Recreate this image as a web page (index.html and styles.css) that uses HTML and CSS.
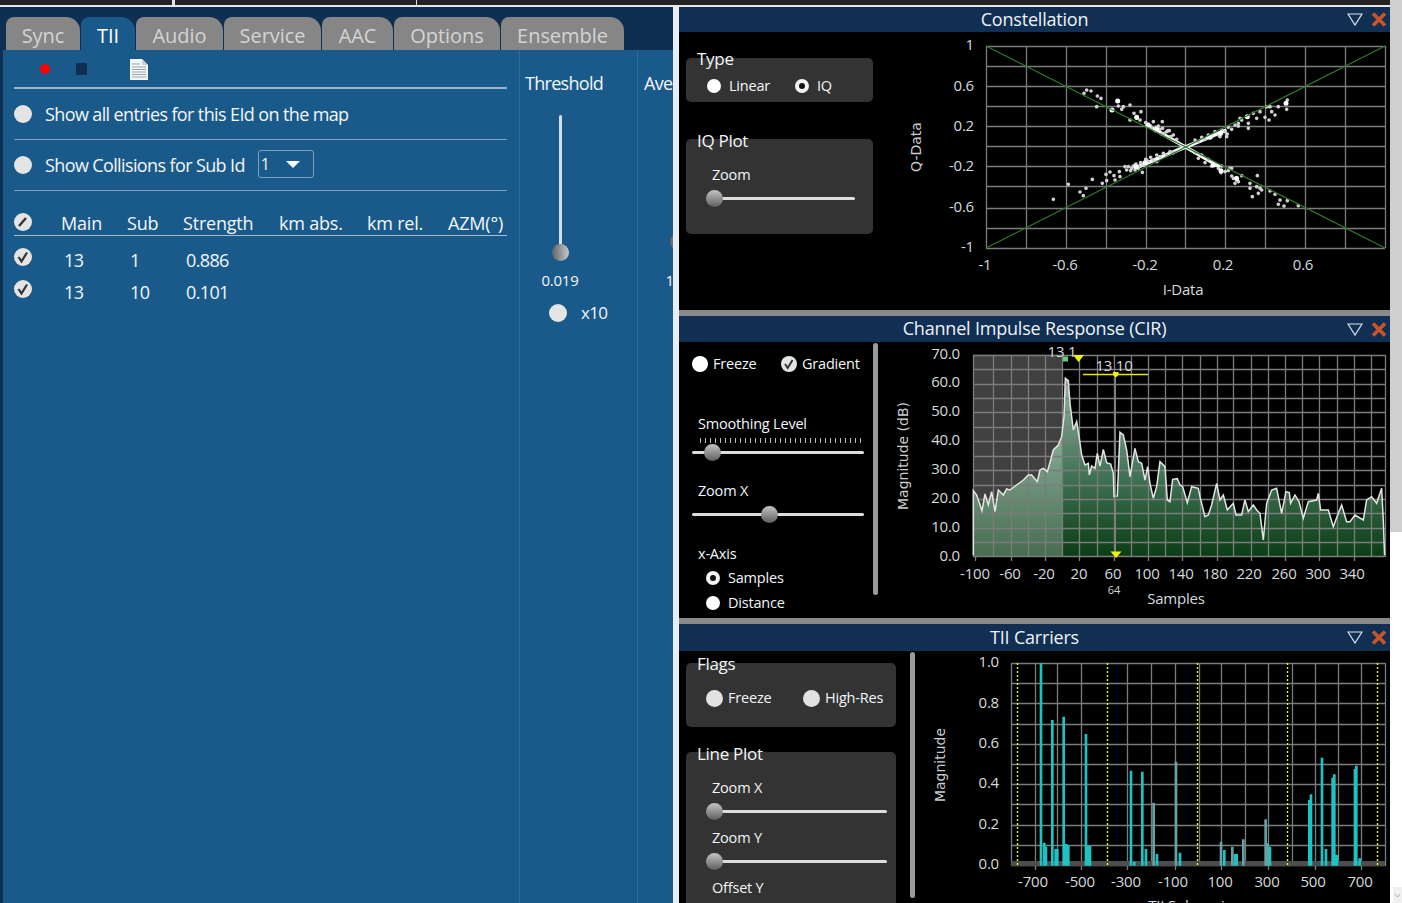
FILE: index.html
```html
<!doctype html>
<html lang="en">
<head>
  <meta charset="utf-8" />
  <title>TII</title>
  <link rel="stylesheet" href="styles.css">
</head>
<body>
  <div class="app">
    <div class="topstrip"><span class="tick-a"></span><span class="tick-b"></span></div>
    <div class="work">

      <!-- left: tab pane -->
      <div class="left">
        <div class="tabs">
          <div class="tab">Sync</div>
          <div class="tab active">TII</div>
          <div class="tab">Audio</div>
          <div class="tab">Service</div>
          <div class="tab">AAC</div>
          <div class="tab">Options</div>
          <div class="tab">Ensemble</div>
        </div>
        <div class="pane">
          <div class="col-main">
            <div class="toolbar">
              <span class="rec"></span>
              <span class="stop"></span>
              <svg class="doc" viewBox="0 0 18 22">
                <path d="M0 1h12l6 6v15H0z" fill="#f4f6f8"/>
                <path d="M12 1v6h6z" fill="#c9d0d6"/>
                <path d="M2 6h8M2 9h14M2 11.500h14M2 14h14M2 16.500h14M2 19h14" stroke="#9aa3ab" stroke-width="1"/>
              </svg>
            </div>
            <div class="opt"><span class="dot big"></span><span>Show all entries for this EId on the map</span></div>
            <div class="opt">
              <span class="dot big"></span><span>Show Collisions for Sub Id</span>
              <div class="combo"><span>1</span><i></i></div>
            </div>
            <div class="grid-head">
              <svg class="chk head-chk" viewBox="0 0 18 18"><circle cx="9" cy="9" r="9" fill="#e4e4e4"/><path d="M5 13l7-8" stroke="#333" stroke-width="2.400"/></svg>
              <span>Main</span><span>Sub</span><span>Strength</span><span>km abs.</span><span>km rel.</span><span>AZM(°)</span>
            </div>
            <div class="grid-row">
              <svg class="chk" viewBox="0 0 18 18"><circle cx="9" cy="9" r="9" fill="#e4e4e4"/><path d="M4.500 9l3 4.500L13 4.500" fill="none" stroke="#333" stroke-width="2.200"/></svg>
              <span>13</span><span>1</span><span>0.886</span>
            </div>
            <div class="grid-row">
              <svg class="chk" viewBox="0 0 18 18"><circle cx="9" cy="9" r="9" fill="#e4e4e4"/><path d="M4.500 9l3 4.500L13 4.500" fill="none" stroke="#333" stroke-width="2.200"/></svg>
              <span>13</span><span>10</span><span>0.101</span>
            </div>
          </div>

          <div class="col-level">
            <div class="level-title">Threshold</div>
            <div class="vslider"><span class="knob-v" style="top:129px"></span></div>
            <div class="level-value">0.019</div>
            <div class="x10"><span class="dot big"></span><span>x10</span></div>
          </div>

          <div class="col-level">
            <div class="level-title">Average</div>
            <div class="vslider"><span class="knob-v" style="top:118px"></span></div>
            <div class="level-value">10.0</div>
          </div>
        </div>
      </div>

      <div class="gutter"></div>

      <!-- right: docks -->
      <div class="docks">

        <section class="dock dock-iq">
          <div class="dock-title h25">
            <span class="dock-name">Constellation</span>
            <span class="dock-btns">
              <svg class="btn-min" viewBox="0 0 16 13"><path d="M1 1h14L8 12z" fill="none" stroke="#dfe6ec" stroke-width="1.200"/></svg>
              <svg class="btn-close" viewBox="0 0 16 15"><path d="M2 1.500l12 12M14 1.500l-12 12" stroke="#c9562a" stroke-width="3.600"/></svg>
            </span>
          </div>
          <div class="dock-body">
            <div class="side w218">
              <div class="group type-box">
                <div class="group-title">Type</div>
                <div class="radios r88">
                  <label class="radio"><span class="dot"></span>Linear</label>
                  <label class="radio"><span class="dot on"></span>IQ</label>
                </div>
              </div>
              <div class="group iq-box">
                <div class="group-title t2">IQ Plot</div>
                <div class="ctl-label">Zoom</div>
                <div class="hslider s149"><span class="knob" style="left:0"></span></div>
              </div>
            </div>
            <svg class="plot" width="493" height="278" viewBox="897 32 493 278">
              <path class="grid" d="M986.500 46V248M1026.500 46V248M1066.500 46V248M1106.500 46V248M1146.500 46V248M1185.500 46V248M1225.500 46V248M1265.500 46V248M1305.500 46V248M1345.500 46V248M1385.500 46V248M986 46.500H1385M986 66.500H1385M986 86.500H1385M986 106.500H1385M986 126.500H1385M986 146.500H1385M986 166.500H1385M986 186.500H1385M986 208.500H1385M986 228.500H1385M986 248.500H1385"/>
              <g transform="translate(980 40) scale(.3333)">
                <path class="band" d="M520 266L616 321M480 378L616 321"/>
                <path class="scatter" d="M320 150h.1M312 160h.1M333 153h.1M352 168h.1M363 175h.1M350 200h.1M415 198h.1M430 200h.1M450 195h.1M395 210h.1M425 208h.1M462 220h.1M483 215h.1M450 240h.1M470 235h.1M480 240h.1M520 245h.1M547 245h.1M565 272h.1M220 478h.1M265 433h.1M300 456h.1M310 467h.1M318 445h.1M337 418h.1M367 430h.1M380 422h.1M378 403h.1M390 396h.1M402 407h.1M418 395h.1M420 410h.1M405 420h.1M435 380h.1M440 390h.1M465 375h.1M487 397h.1M455 385h.1M500 360h.1M530 365h.1"/>
                <path class="scatter" d="M497 248h.1M505 252h.1M512 258h.1M528 262h.1M535 258h.1M540 268h.1M548 265h.1M552 280h.1M560 275h.1M568 272h.1M572 290h.1M580 285h.1M590 298h.1M500 258h.1M515 265h.1M525 272h.1M545 282h.1M445 380h.1M452 392h.1M460 378h.1M468 372h.1M475 385h.1M482 368h.1M490 375h.1M497 358h.1M505 365h.1M512 352h.1M520 360h.1M530 345h.1M540 350h.1M550 340h.1M560 345h.1M570 335h.1M580 338h.1M465 390h.1M478 378h.1"/>
                <path class="scatter hot" d="M413 183h.1M396 210h.1M470 232h.1M505 256h.1M530 268h.1M468 380h.1M495 368h.1"/>
              </g>
              <g transform="translate(1190 40) scale(.3333)">
                <path class="band" d="M-13 321L105 272M-13 321L85 378"/>
                <path class="scatter" d="M292 180h.1M287 190h.1M290 208h.1M265 200h.1M240 200h.1M230 200h.1M210 215h.1M245 215h.1M255 225h.1M200 235h.1M237 240h.1M225 232h.1M175 265h.1M175 250h.1M150 235h.1M145 258h.1M110 290h.1M190 220h.1M125 408h.1M140 420h.1M155 407h.1M135 430h.1M180 430h.1M202 407h.1M200 440h.1M180 445h.1M215 450h.1M205 460h.1M187 470h.1M240 453h.1M255 463h.1M270 480h.1M292 482h.1M265 493h.1M282 498h.1M325 497h.1M93 398h.1M120 385h.1M210 445h.1"/>
                <path class="scatter" d="M15 300h.1M25 305h.1M35 292h.1M45 298h.1M55 285h.1M65 290h.1M75 275h.1M85 285h.1M95 270h.1M105 275h.1M115 262h.1M125 268h.1M135 255h.1M145 250h.1M155 240h.1M90 290h.1M112 282h.1M15 338h.1M25 355h.1M35 345h.1M45 368h.1M55 358h.1M65 378h.1M75 372h.1M85 385h.1M95 378h.1M105 395h.1M115 392h.1M125 385h.1M130 415h.1M145 425h.1"/>
                <path class="scatter hot" d="M288 190h.1M172 230h.1M140 415h.1M60 292h.1M92 280h.1M70 375h.1M93 392h.1"/>
              </g>
              <path class="diag" d="M986 46L1385 248M986 248L1385 46"/>
              <g class="tk end">
                <text x="974" y="50">1</text><text x="974" y="91">0.6</text><text x="974" y="131">0.2</text><text x="974" y="171">-0.2</text><text x="974" y="212">-0.6</text><text x="974" y="252">-1</text>
              </g>
              <g class="tk mid">
                <text x="985" y="270">-1</text><text x="1065" y="270">-0.6</text><text x="1145" y="270">-0.2</text><text x="1223" y="270">0.2</text><text x="1303" y="270">0.6</text>
                <text x="1183" y="295">I-Data</text>
              </g>
              <text class="ax" transform="rotate(-90 921 147)" x="921" y="147">Q-Data</text>
            </svg>
          </div>
        </section>

        <div class="sash"></div>

        <section class="dock dock-cir">
          <div class="dock-title h26">
            <span class="dock-name">Channel Impulse Response (CIR)</span>
            <span class="dock-btns">
              <svg class="btn-min" viewBox="0 0 16 13"><path d="M1 1h14L8 12z" fill="none" stroke="#dfe6ec" stroke-width="1.200"/></svg>
              <svg class="btn-close" viewBox="0 0 16 15"><path d="M2 1.500l12 12M14 1.500l-12 12" stroke="#c9562a" stroke-width="3.600"/></svg>
            </span>
          </div>
          <div class="dock-body">
            <div class="side w218 cir-side">
              <div class="side-scroll">
                <div class="radios r89 cir-flags">
                  <label class="radio"><span class="dot"></span>Freeze</label>
                  <label class="radio"><svg class="chk" viewBox="0 0 18 18"><circle cx="9" cy="9" r="9" fill="#e4e4e4"/><path d="M4.500 9l3 4.500L13 4.500" fill="none" stroke="#333" stroke-width="2.200"/></svg>Gradient</label>
                </div>
                <div class="plain-label m42">Smoothing Level</div>
                <div class="notches"></div>
                <div class="hslider s172 thick"><span class="knob" style="left:12px"></span></div>
                <div class="plain-label m21">Zoom X</div>
                <div class="hslider s172 gap6"><span class="knob" style="left:69px"></span></div>
                <div class="plain-label m22">x-Axis</div>
                <label class="radio axis-a"><span class="dot on"></span>Samples</label>
                <label class="radio axis-b"><span class="dot"></span>Distance</label>
              </div>
              <div class="vbar h252"></div>
            </div>
            <svg class="plot" width="493" height="276" viewBox="897 342 493 276">
              <defs>
                <linearGradient id="cirFill" gradientUnits="userSpaceOnUse" x1="0" y1="90" x2="0" y2="651">
                  <stop offset="0" stop-color="#9db5a6"/>
                  <stop offset=".53" stop-color="#45785a"/>
                  <stop offset="1" stop-color="#0a3c14"/>
                </linearGradient>
                <clipPath id="cirClip"><rect x="0" y="0" width="1290" height="646"/></clipPath>
                <path id="cirCurve" d="M40 650L40 452L50 465L66 512L75 462L85 495L95 455L105 515L115 450L130 465L140 447L150 450L170 435L190 420L205 405L215 405L232 425L240 390L250 385L262 395L272 360L280 330L295 315L305 290L312 230L316 115L325 122L330 190L340 270L350 245L358 295L365 345L375 375L385 370L388 405L395 378L405 385L412 340L420 378L430 328L440 368L452 372L460 400L462 470L472 468L480 277L490 285L500 330L510 410L517 370L525 325L535 365L545 370L555 420L563 380L570 430L580 475L590 440L600 365L615 380L622 480L630 485L638 418L652 416L660 435L668 440L682 488L695 440L715 445L720 470L735 530L745 525L755 495L770 430L780 480L790 465L802 510L820 490L828 525L845 525L855 480L865 515L880 495L890 510L900 520L910 600L920 490L935 450L950 445L965 520L978 455L988 458L992 490L1005 465L1017 485L1030 535L1045 485L1070 480L1075 460L1082 510L1105 510L1120 560L1135 520L1145 495L1160 545L1170 545L1185 525L1210 540L1220 480L1235 470L1250 490L1265 445L1270 540L1274 650"/>
              </defs>
              <g transform="translate(960 340) scale(.3333)">
                <use href="#cirCurve" fill="url(#cirFill)"/>
                <rect x="40" y="44" width="267" height="606" fill="#fff" opacity=".25"/>
              </g>
              <path class="grid" d="M973.500 355V557M993.500 355V557M1011.500 355V557M1028.500 355V557M1045.500 355V557M1062.500 355V557M1079.500 355V557M1097.500 355V557M1114.500 355V557M1131.500 355V557M1148.500 355V557M1165.500 355V557M1182.500 355V557M1200.500 355V557M1217.500 355V557M1233.500 355V557M1251.500 355V557M1268.500 355V557M1285.500 355V557M1302.500 355V557M1319.500 355V557M1337.500 355V557M1354.500 355V557M1371.500 355V557M1385.500 355V557M973 355.500H1385M973 369.500H1385M973 384.500H1385M973 398.500H1385M973 412.500H1385M973 427.500H1385M973 441.500H1385M973 456.500H1385M973 470.500H1385M973 485.500H1385M973 499.500H1385M973 513.500H1385M973 528.500H1385M973 542.500H1385M973 556.500H1385"/>
              <path class="grid" d="M975.500 557v4M1011.500 557v4M1045.500 557v4M1079.500 557v4M1114.500 557v4M1148.500 557v4M1182.500 557v4M1217.500 557v4M1251.500 557v4M1285.500 557v4M1319.500 557v4M1354.500 557v4"/>
              <g transform="translate(960 340) scale(.3333)" clip-path="url(#cirClip)">
                <use href="#cirCurve" class="curve"/>
              </g>
              <path class="marker-line" d="M1115.500 374V557"/>
              <path class="yellow-line" d="M1083 374.500H1148"/>
              <rect class="green-mark" x="1063" y="356.500" width="5" height="5"/>
              <path class="yellow" d="M1073 355h11l-5.500 7zM1110.500 551.500h11l-5.500 6.500zM1113 372h5.500v3l-2.700 2.500-2.800-2.500z"/>
              <g class="tk end">
                <text x="960" y="359">70.0</text><text x="960" y="387">60.0</text><text x="960" y="416">50.0</text><text x="960" y="445">40.0</text><text x="960" y="474">30.0</text><text x="960" y="503">20.0</text><text x="960" y="532">10.0</text><text x="960" y="561">0.0</text>
              </g>
              <g class="tk mid">
                <text x="975" y="579">-100</text><text x="1010" y="579">-60</text><text x="1044" y="579">-20</text><text x="1079" y="579">20</text><text x="1113" y="579">60</text><text x="1147" y="579">100</text><text x="1181" y="579">140</text><text x="1215" y="579">180</text><text x="1249" y="579">220</text><text x="1284" y="579">260</text><text x="1318" y="579">300</text><text x="1352" y="579">340</text>
                <text x="1176" y="604">Samples</text>
                <text x="1062" y="357">13 1</text><text x="1114" y="371">13 10</text>
              </g>
              <text class="tk-small" x="1114" y="594">64</text>
              <text class="ax" transform="rotate(-90 908 456)" x="908" y="456">Magnitude (dB)</text>
            </svg>
          </div>
        </section>

        <div class="sash"></div>

        <section class="dock dock-tii">
          <div class="dock-title h27">
            <span class="dock-name">TII Carriers</span>
            <span class="dock-btns">
              <svg class="btn-min" viewBox="0 0 16 13"><path d="M1 1h14L8 12z" fill="none" stroke="#dfe6ec" stroke-width="1.200"/></svg>
              <svg class="btn-close" viewBox="0 0 16 15"><path d="M2 1.500l12 12M14 1.500l-12 12" stroke="#c9562a" stroke-width="3.600"/></svg>
            </span>
          </div>
          <div class="dock-body">
            <div class="side w239">
              <div class="side-scroll clip">
                <div class="group flags-box">
                  <div class="group-title">Flags</div>
                  <div class="radios r97 flags-row">
                    <label class="radio gap-s"><span class="dot grey"></span>Freeze</label>
                    <label class="radio gap-s"><span class="dot grey"></span>High-Res</label>
                  </div>
                </div>
                <div class="group line-box">
                  <div class="group-title t2">Line Plot</div>
                  <div class="ctl-label">Zoom X</div>
                  <div class="hslider s181"><span class="knob" style="left:0"></span></div>
                  <div class="ctl-label m9">Zoom Y</div>
                  <div class="hslider s181"><span class="knob" style="left:0"></span></div>
                  <div class="ctl-label m9">Offset Y</div>
                </div>
              </div>
              <div class="vbar h246"></div>
            </div>
            <svg class="plot" width="472" height="252" viewBox="918 651 472 252">
              <path class="grid" d="M1011.500 663V866M1035.500 663V866M1057.500 663V866M1081.500 663V866M1127.500 663V866M1151.500 663V866M1175.500 663V866M1199.500 663V866M1221.500 663V866M1245.500 663V866M1268.500 663V866M1292.500 663V866M1315.500 663V866M1338.500 663V866M1361.500 663V866M1385.500 663V866M1011 663.500H1385M1011 683.500H1385M1011 703.500H1385M1011 724.500H1385M1011 744.500H1385M1011 764.500H1385M1011 784.500H1385M1011 804.500H1385M1011 825.500H1385M1011 845.500H1385M1011 865.500H1385"/>
              <path class="grid" d="M1035.500 866v4M1081.500 866v4M1127.500 866v4M1175.500 866v4M1221.500 866v4M1268.500 866v4M1315.500 866v4M1361.500 866v4"/>
              <rect class="floor" x="1011" y="861" width="374" height="5"/>
              <path class="dash" d="M1017.500 663V865M1107.500 663V865M1197.500 663V865M1287.500 663V865M1377.500 663V865"/>
              <g transform="translate(1000 650) scale(.3333)">
                <path class="bars" d="M123 647V40M157 647V210M191 647V200M258 647V252M393 647V362M427 647V365M133 647V578M138 647V590M167 647V597M172 647V597M199 647V582M205 647V585M263 647V588M270 647V588M403 647V635M438 647V597M471 647V612M540 647V608"/>
                <path class="bars dim" d="M461 647V458M528 647V335"/>
              </g>
              <g transform="translate(1200 650) scale(.3333)">
                <path class="bars" d="M73 647V600M105 647V612M110 647V612M210 647V590M328 647V450M333 647V433M366 647V323M378 647V597M398 647V383M403 647V373M411 647V615M465 647V357M469 647V347M479 647V625"/>
                <path class="bars dim" d="M63 647V575M97 647V590M130 647V568M197 647V508M203 647V580"/>
              </g>
              <g class="tk end">
                <text x="999" y="667">1.0</text><text x="999" y="708">0.8</text><text x="999" y="748">0.6</text><text x="999" y="788">0.4</text><text x="999" y="829">0.2</text><text x="999" y="869">0.0</text>
              </g>
              <g class="tk mid">
                <text x="1033" y="887">-700</text><text x="1080" y="887">-500</text><text x="1126" y="887">-300</text><text x="1173" y="887">-100</text><text x="1220" y="887">100</text><text x="1267" y="887">300</text><text x="1313" y="887">500</text><text x="1360" y="887">700</text>
                <text x="1197" y="911">TII Subcarriers</text>
              </g>
              <text class="ax" transform="rotate(-90 945 765)" x="945" y="765">Magnitude</text>
            </svg>
          </div>
        </section>
      </div>
    </div>
  </div>

  <div class="edge">
    <div class="edge-grey"></div>
    <div class="edge-white"></div>
    <div class="edge-arrow">
      <svg viewBox="0 0 9 6"><path d="M1 1l3.500 4L8 1" fill="none" stroke="#9a9a9a"/></svg>
    </div>
  </div>
</body>
</html>
```

FILE: styles.css
```css
:root{--navy:#0e2e52;--pane:#1a5a8a;--ui:"Open Sans","Noto Sans",sans-serif;--text:#f2f6f9}
html,body{margin:0;height:100%}
body{width:1402px;height:903px;overflow:hidden;display:flex;background:#000;font-family:var(--ui);color:var(--text)}
.app{width:1390px;display:flex;flex-direction:column}
.topstrip{height:5px;flex:none;background:#232323;border-bottom:2px solid #e6e6e6;display:flex}
.tick-a{width:3px;height:7px;background:#e6e6e6;margin-left:172px}
.tick-b{width:1px;height:7px;background:#ddd;margin-left:241px}
.work{flex:1;display:flex;min-height:0}

/* left pane */
.left{width:670px;padding-left:3px;background:var(--navy);flex:none;display:flex;flex-direction:column}
.tabs{display:grid;grid-template-columns:74px 54px 87px 97px 71px 106px 123px;gap:1px;margin:10px 0 0 3px;height:33px}
.tab{background:#868686;color:#d4d4d4;border-radius:8px 14px 0 0;font-size:20px;letter-spacing:-.05px;line-height:37px;text-align:center}
.tab.active{background:var(--pane);color:#fff}
.pane{flex:1;background:var(--pane);display:flex;overflow:hidden}
.col-main{width:493px;padding:0 12px 0 11px;flex:none;font-size:18px;letter-spacing:-.62px}
.toolbar{height:37px;border-bottom:2px solid #9bb3c6;display:flex;align-items:center;padding-left:26px}
.rec{width:10px;height:10px;border-radius:50%;background:#f00}
.stop{width:11px;height:12px;background:var(--navy);margin-left:26px}
.doc{width:18px;height:22px;margin-left:43px}
.opt{height:50px;border-bottom:1px solid #7fa0bc;display:flex;align-items:center;gap:13px}
.dot{width:14px;height:14px;border-radius:50%;background:#fff;flex:none;box-sizing:border-box}
.dot.big{width:18px;height:18px;background:#e4e4e4}
.dot.grey{width:17px;height:17px;background:#e2e2e2}
.dot.on{background:#111;border:4px solid #f4f4f4}
.combo{width:52px;height:26px;border:1px solid #7fa0bc;border-radius:3px;margin-left:0;display:flex;align-items:center;font-size:16px;padding-left:2px;position:relative;bottom:1px}
.combo i{width:0;height:0;border:7px solid transparent;border-top:7px solid #fff;border-bottom:0;margin-left:17px}
.grid-head,.grid-row{display:grid;grid-template-columns:47px 66px 56px 96px 88px 81px 59px;align-items:center}
.grid-head{height:24px;margin-top:20px;border-bottom:1px solid #a9bdcc;white-space:nowrap;letter-spacing:-.2px}
.grid-head .chk{margin-top:-3px}
.grid-row{height:32px;margin-top:0}
.grid-head+.grid-row{margin-top:8px}
.grid-row span{padding-left:3px}
.grid-row .chk{margin-top:-7px}
.chk{width:18px;height:18px;flex:none}
.col-level{width:117px;flex:none;border-left:1px solid #2b6c9c;font-size:18px;letter-spacing:-.7px}
.col-level+.col-level{width:60px}
.level-title{margin:21px 0 0 5px;line-height:24px;white-space:nowrap}
.col-level+.col-level .level-title{margin-left:6px}
.vslider{width:3px;height:140px;margin:20px 0 0 39px;background:#d5dfe7;border-radius:2px;position:relative}
.col-level+.col-level .vslider{margin-left:39px}
.knob-v,.knob{position:absolute;width:17px;height:17px;border-radius:50%}
.knob-v{left:-7px;background:linear-gradient(90deg,#5f6468,#c8c8c8)}
.level-value{width:80px;margin-top:15px;text-align:center;font-size:15px;line-height:20px;letter-spacing:-.2px}
.col-level+.col-level .level-value{margin-left:2px}
.x10{display:flex;align-items:center;gap:14px;margin:11px 0 0 29px;font-size:17px}
.gutter{width:6px;flex:none;background:#e9eef3}

/* right docks */
.docks{width:711px;flex:none;display:flex;flex-direction:column;background:#000}
.dock{display:flex;flex-direction:column;flex:none;overflow:hidden}
.dock-iq{height:303px}
.dock-cir{height:302px}
.dock-tii{flex:1;min-height:0}
.sash{height:6px;flex:none;background:#8a8a8a}
.dock-title{flex:none;background:#102f52;display:grid;grid-template-columns:1fr auto 1fr;align-items:center;font-size:18px;letter-spacing:-.2px;color:#eef3f7;line-height:22px}
.dock-name{grid-column:2;white-space:nowrap;margin-bottom:2px}
.h25{height:25px}.h26{height:26px}.h27{height:27px}
.dock-btns{grid-column:3;display:flex;align-items:center;justify-content:flex-end;gap:8px;padding-right:3px}
.btn-min{width:16px;height:13px}
.btn-close{width:16px;height:15px}
.dock-body{flex:1;display:flex;min-height:0}
.side{flex:none;display:flex;font-size:14.500px;letter-spacing:-.2px;box-sizing:border-box}
.dock-iq .side{display:block;padding:26px 0 0 7px}
.w218{width:218px}.w239{width:239px}
.group{background:#333;border-radius:5px;box-sizing:border-box;display:flow-root}
.group-title{font-size:17px;line-height:20px;margin:-9px 0 0 11px;letter-spacing:-.3px}
.group-title.t2{margin-top:-8px}
.type-box{width:187px;height:44px;margin-top:0}
.iq-box{width:187px;height:95px;margin-top:37px}
.radios{display:grid}
.r88{grid-template-columns:88px 88px;margin:8px 0 0 21px}
.r89{grid-template-columns:89px 89px}
.r97{grid-template-columns:97px 97px}
.radio{display:flex;align-items:center;gap:8px;white-space:nowrap;line-height:18px}
.radio.gap-s{gap:5px}
.ctl-label{line-height:18px;margin:15px 0 0 26px}
.ctl-label.m9{margin-top:9px}
.hslider{height:17px;position:relative;margin:6px 0 0 20px}
.hslider::before{content:"";position:absolute;left:8px;right:0;top:7px;height:3px;background:#ddd;border-radius:2px}
.knob{top:0;background:linear-gradient(#c4c4c4,#5e5e5e)}
.s149{width:149px}.s181{width:181px}
.s172{width:172px;margin:0}
.s172::before{left:0}
.s172.gap6{margin-top:6px}
.thick::before{top:6.500px;height:3px}
.side-scroll{flex:1;min-width:0;padding-left:13px}
.clip{padding-left:7px;overflow:hidden}
.cir-side .side-scroll{padding-top:13px}
.cir-flags .chk{width:16px;height:16px}
.cir-flags .dot{width:16px;height:16px}
.cir-flags .radio{gap:5px}
.plain-label{line-height:18px;margin-left:6px}
.m42{margin-top:42px}.m21{margin-top:21px}.m22{margin-top:22px}
.notches{height:5px;margin:5px 8px 1px 8px;background:repeating-linear-gradient(90deg,#bbb 0 1px,transparent 1px 5px)}
.axis-a{margin:6px 0 0 14px}
.axis-b{margin:7px 0 0 14px}
.vbar{width:5px;background:#9a9a9a;border-radius:3px;flex:none;margin-top:1px}
.h252{height:252px;margin-right:19px}
.h246{height:246px;margin-right:3px}
.flags-box{width:210px;height:64px;margin-top:12px}
.flags-row{margin:15px 0 0 20px}
.line-box{width:210px;height:170px;margin-top:25px}
.plot{display:block;flex:none}

/* plot parts */
.grid{fill:none;stroke:#7c7c7c;stroke-width:1.300}
.diag{fill:none;stroke:#2a7a2a;stroke-width:1.200}
.scatter{fill:none;stroke:#d0d0d0;stroke-width:11;stroke-linecap:round}
.scatter.hot{stroke:#fff;stroke-width:15}
.band{fill:none;stroke:#fff;stroke-width:11;stroke-linecap:round}
.curve{fill:none;stroke:#e2e6e3;stroke-width:4.500}
.marker-line{fill:none;stroke:#808080;stroke-width:1}
.yellow-line{fill:none;stroke:#e8e80c;stroke-width:1.300}
.yellow{fill:#f2f20c}
.green-mark{fill:#5fd07f}
.floor{fill:#4d4d4d}
.dash{fill:none;stroke:#f0f020;stroke-width:1.400;stroke-dasharray:2 2}
.bars{fill:none;stroke:#1fc2c4;stroke-width:8}
.bars.dim{stroke:#63a3a5}
.tk text{font-family:var(--ui);font-size:15px;letter-spacing:-.2px;fill:#d6dadd}
.tk.end text{text-anchor:end}
.tk.mid text{text-anchor:middle}
.tk-small{font-family:var(--ui);font-size:11px;fill:#cfd3d6;text-anchor:middle}
.ax{font-family:"DejaVu Sans",sans-serif;font-size:14px;fill:#c9cdd0;text-anchor:middle}

/* far right */
.edge{width:12px;flex:none;display:flex;flex-direction:column;background:#fff}
.edge-grey{height:532px;background:#cfcfcf}
.edge-white{flex:1}
.edge-arrow{height:16px;background:#f0f0f0;margin-left:3px;display:flex;align-items:center;justify-content:center}
.edge-arrow svg{width:7px;height:5px}
```
